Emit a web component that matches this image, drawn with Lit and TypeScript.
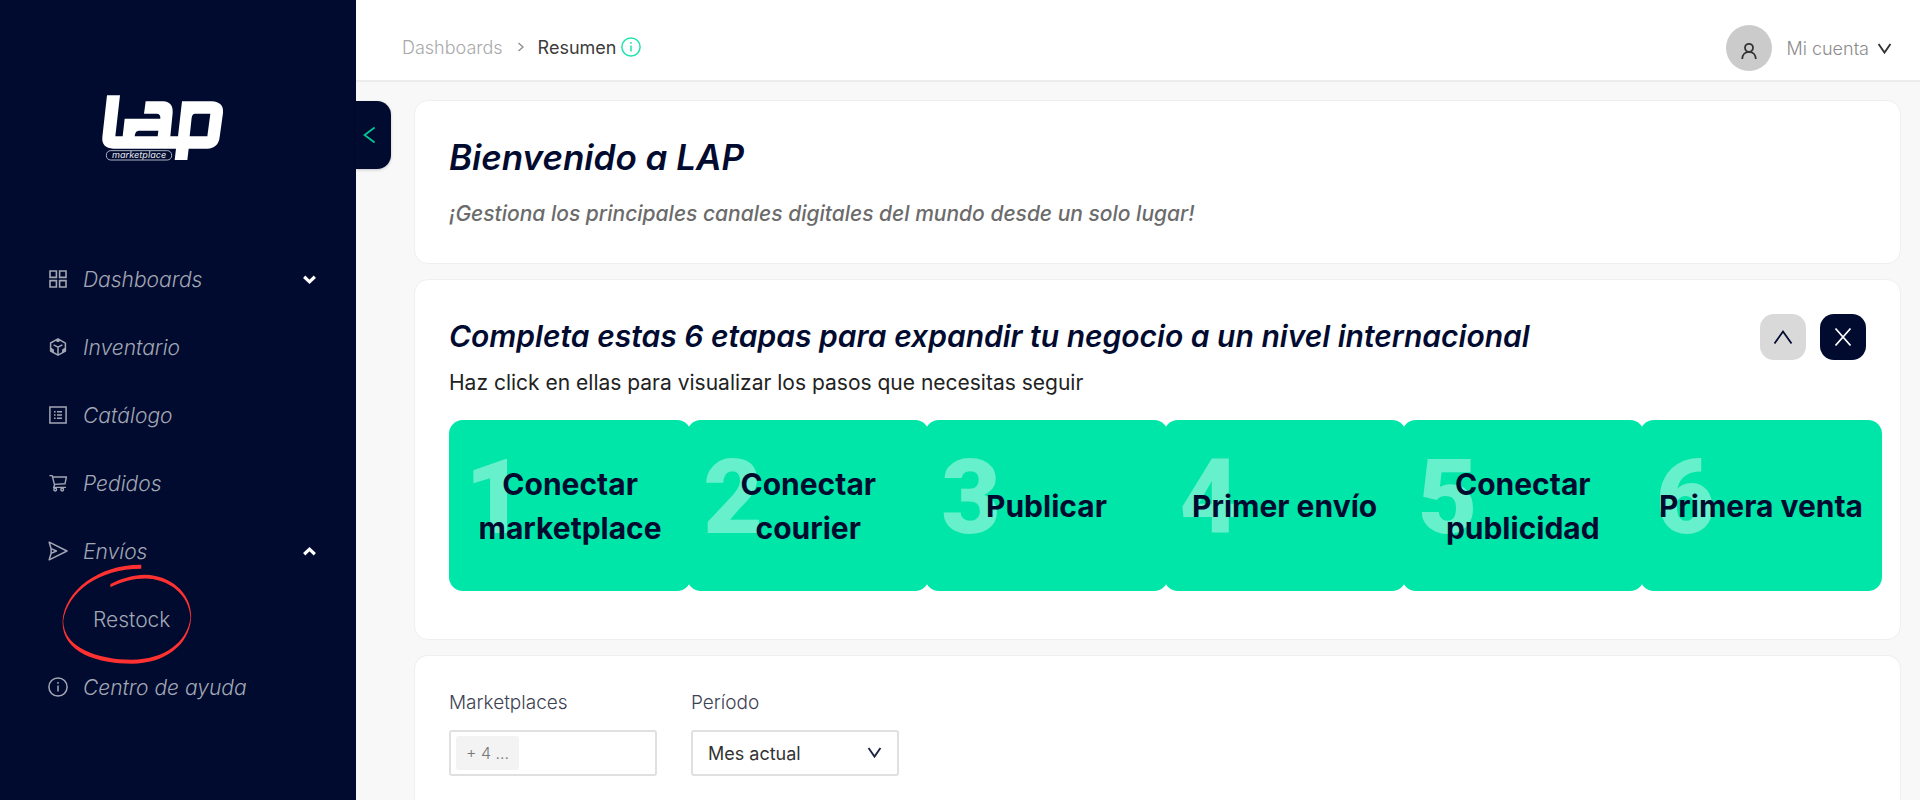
import { LitElement, html, css, svg } from "lit";
import { customElement, state } from "lit/decorators.js";

const icons = {
  grid: svg`<svg class="icon" viewBox="0 0 18 18" fill="none" stroke="currentColor" stroke-width="1.6"><path d="M1 1h6.4v6.4H1zM10.6 1H17v6.4h-6.4zM1 10.6h6.4V17H1zM10.6 10.6H17V17h-6.4z"/></svg>`,
  box: svg`<svg class="icon" viewBox="0 0 18 18" fill="none" stroke="currentColor" stroke-width="1.5" stroke-linejoin="round"><path d="M9 .9l7.4 4.2v8L9 17.2 1.6 13V5z"/><path d="M4.6 6.8L9 9.2l4.4-2.4M9 9.2V17"/><path d="M6.6 2.4L9 3.8l2.4-1.4L9 1zM1.8 10.2l2.6 1.4v2.8L1.8 13zM16.2 10.2l-2.6 1.4v2.8l2.6-1.4z" fill="currentColor" stroke-width="1"/></svg>`,
  list: svg`<svg class="icon" viewBox="0 0 18 18" fill="none" stroke="currentColor" stroke-width="1.5"><path d="M.9.9h16.2v16.2H.9z"/><path d="M5 5.8h1.6M5 9h1.6M5 12.2h1.6M8 5.8h5M8 9h5M8 12.2h5" stroke-width="1.5"/></svg>`,
  cart: svg`<svg class="icon" viewBox="0 0 18 18" fill="none" stroke="currentColor" stroke-width="1.4" stroke-linejoin="round"><path d="M.4 1.6h2.8l2.4 9.600"/><path d="M3.600 3h13.800l-1.400 6.800-10.600.6"/><path d="M5.600 11l-1 2.400h12.400"/><circle cx="6.200" cy="15.600" r="1.400"/><circle cx="13.200" cy="15.600" r="1.400"/></svg>`,
  send: svg`<svg class="icon wide" viewBox="0 0 20 20" fill="none" stroke="currentColor" stroke-width="1.5" stroke-linejoin="round"><path d="M1.2 1.2L19 10 1.2 18.8l1.9-6.6V7.8z"/><path d="M3.1 7.6L8.4 10l-5.3 2.4"/></svg>`,
  info: svg`<svg class="icon wide" viewBox="0 0 20 20" fill="none" stroke="currentColor" stroke-width="1.5"><circle cx="10" cy="10" r="9.1"/><path d="M10 8.4v6.2M10 5v1.8"/></svg>`,
};

const chevron = (d: string, cls: string) =>
  svg`<svg class=${cls} viewBox="0 0 16 12" fill="none" stroke="currentColor"><path d=${d}/></svg>`;

interface NavItem {
  id: string;
  label: string;
  icon: keyof typeof icons;
  children?: string[];
}

const NAV: NavItem[] = [
  { id: "dashboards", label: "Dashboards", icon: "grid", children: ["Resumen"] },
  { id: "inventario", label: "Inventario", icon: "box" },
  { id: "catalogo", label: "Catálogo", icon: "list" },
  { id: "pedidos", label: "Pedidos", icon: "cart" },
  { id: "envios", label: "Envíos", icon: "send", children: ["Restock"] },
  { id: "ayuda", label: "Centro de ayuda", icon: "info" },
];

const STEPS = [
  "Conectar marketplace",
  "Conectar courier",
  "Publicar",
  "Primer envío",
  "Conectar publicidad",
  "Primera venta",
];

@customElement("lap-sidebar")
class LapSidebar extends LitElement {
  @state() private open = new Set(["envios"]);

  static styles = css`
    :host {
      display: block;
      position: relative;
      background: #000b2f;
      color: #a3a7b4;
    }
    .logo {
      display: block;
      width: 127px;
      height: 70px;
      margin: 93px 0 0 100px;
    }
    .tag {
      font: italic 500 27px Inter, sans-serif;
    }
    nav {
      padding: 82px 38px 0 48px;
    }
    ul {
      list-style: none;
      margin: 0;
      padding: 0;
    }
    .item {
      display: flex;
      align-items: center;
      width: 100%;
      height: 68px;
      box-sizing: border-box;
      gap: 15px;
      padding: 0;
      border: 0;
      background: none;
      color: inherit;
      font: italic 300 21px Inter, sans-serif;
      text-decoration: none;
      text-align: left;
      cursor: pointer;
    }
    .icon {
      width: 18px;
      height: 18px;
      margin: 0 1px;
      flex: none;
    }
    .icon.wide {
      width: 20px;
      height: 20px;
      margin: 0;
    }
    .label {
      flex: 1;
    }
    .caret {
      width: 17px;
      height: 13px;
      stroke-width: 3;
      color: #fff;
    }
    .child {
      position: relative;
    }
    .child .item {
      padding-left: 45px;
      font-style: normal;
    }
    .mark {
      position: absolute;
      left: 14px;
      top: -21px;
      width: 130px;
      height: 100px;
      pointer-events: none;
    }
    .toggle {
      position: absolute;
      left: 100%;
      top: 101px;
      width: 35px;
      height: 68px;
      padding: 0 0 0 6px;
      border: 0;
      border-radius: 0 14px 14px 0;
      background: #000b2f;
      color: #00c795;
      box-shadow: 0 1px 3px rgba(0, 0, 0, 0.2);
      cursor: pointer;
    }
    .back {
      display: block;
      width: 16px;
      height: 18px;
    }
  `;

  private flip(id: string) {
    const next = new Set(this.open);
    next.has(id) ? next.delete(id) : next.add(id);
    this.open = next;
  }

  private renderItem(item: NavItem) {
    if (!item.children) {
      return html`<li><a class="item" href="#${item.id}">${icons[item.icon]}<span class="label">${item.label}</span></a></li>`;
    }
    const open = this.open.has(item.id);
    return html`<li>
      <button class="item" type="button" aria-expanded=${open} @click=${() => this.flip(item.id)}>
        ${icons[item.icon]}<span class="label">${item.label}</span>
        ${chevron(open ? "M3 8.6l5-4.8 5 4.8" : "M3 3.4l5 4.8 5-4.8", "caret")}
      </button>
      ${open
        ? html`<ul>
            ${item.children.map(
              (c) => html`<li class="child">
                <a class="item" href="#${c.toLowerCase()}">${c}</a>
                ${c === "Restock"
                  ? svg`<svg class="mark" viewBox="185 163 390 301" aria-hidden="true"><path fill="#ff3131" d="M423 165C300 163 192 240 186 335C184 430 290 463 395 463C490 463 568 410 573 325C576 250 510 196 435 195C400 195 360 207 330 223V233C365 217 400 207 435 207C505 208 568 255 571 325C562 400 490 451 395 451C290 450 190 415 188 335C200 245 300 176 423 177Z"/></svg>`
                  : ""}
              </li>`
            )}
          </ul>`
        : ""}
    </li>`;
  }

  render() {
    return html`
      <svg class="logo" viewBox="300 100 381 210" role="img" aria-label="LAP marketplace">
        <path fill="#fff" fill-rule="evenodd" d="M321 107H360L346 230H368L374 177H481Q482 162 470 162H432L437 125H490Q520 127 518 160L511 230H534L546 125H635Q672 127 669 160L659 232Q655 266 622 267H566L562 301H524L528 267H340Q304 265 307 232ZM416 213H475L473 230H404L406 221Q408 213 416 213ZM585 162H631L622 230H569L575 174Q577 162 585 162Z"/>
        <rect x="319" y="273" width="196" height="28" rx="13" fill="none" stroke="#aeb2c0" stroke-width="3"/>
        <text class="tag" x="336" y="295" fill="#d5d7df">marketplace</text>
      </svg>
      <nav><ul>${NAV.map((i) => this.renderItem(i))}</ul></nav>
      <button class="toggle" type="button" aria-label="Contraer menú">
        <svg class="back" viewBox="0 0 16 18" fill="none" stroke="currentColor" stroke-width="1.8"><path d="M12.6 1.5L2.6 9l10 7.5"/></svg>
      </button>
    `;
  }
}

@customElement("lap-topbar")
class LapTopbar extends LitElement {
  static styles = css`
    :host {
      display: flex;
      align-items: center;
      justify-content: space-between;
      height: 82px;
      box-sizing: border-box;
      padding: 14px 28px 0 46px;
      border-bottom: 2px solid #ececec;
      background: #fff;
      font: 300 18px Inter, sans-serif;
      color: #8c8c8c;
    }
    .crumbs {
      display: flex;
      align-items: center;
    }
    .crumb {
      color: #a9a9a9;
      text-decoration: none;
    }
    .sep {
      width: 8px;
      height: 10px;
      margin: 0 13px 0 14px;
    }
    .here {
      color: #3c3c3c;
      font-weight: 400;
    }
    .icon {
      width: 20px;
      height: 20px;
      margin-left: 5px;
      color: #1fe3ae;
    }
    .account {
      display: flex;
      align-items: center;
      padding: 2px 0 0;
      border: 0;
      background: none;
      font: inherit;
      color: inherit;
      cursor: pointer;
    }
    .avatar {
      display: grid;
      place-items: center;
      width: 46px;
      height: 46px;
      margin-right: 14px;
      border-radius: 50%;
      background: #cbcbcb;
      color: #333;
    }
    .person {
      width: 16px;
      height: 18px;
      margin-top: 6px;
    }
    .down {
      width: 15px;
      height: 11px;
      margin-left: 8px;
      stroke-width: 2;
      color: #333;
    }
  `;

  render() {
    return html`
      <nav class="crumbs" aria-label="Ruta">
        <a class="crumb" href="#dashboards">Dashboards</a>
        <svg class="sep" viewBox="0 0 8 10" fill="none" stroke="#8c8c8c" stroke-width="1.3"><path d="M1.5 1l4.5 4-4.5 4"/></svg>
        <span class="here" aria-current="page">Resumen</span>
        ${icons.info}
      </nav>
      <button class="account" type="button">
        <span class="avatar"><svg class="person" viewBox="0 0 16 18" fill="none" stroke="currentColor" stroke-width="1.8"><circle cx="8" cy="5.8" r="4"/><path d="M1.2 17c.2-4.2 2.8-7.2 6.8-7.2s6.6 3 6.8 7.2"/></svg></span>
        <span>Mi cuenta</span>
        ${chevron("M1.5 1l6.5 9.5 6.5-9.5", "down")}
      </button>
    `;
  }
}

@customElement("app-root")
class AppRoot extends LitElement {
  static styles = css`
    :host {
      display: grid;
      grid-template-columns: 356px minmax(0, 1fr);
      min-height: 100vh;
      background: #f8f8f8;
      font-family: Inter, sans-serif;
    }
    .page {
      display: flex;
      flex-direction: column;
    }
    lap-sidebar {
      z-index: 1;
    }
    main {
      flex: 1;
      display: flex;
      flex-direction: column;
      gap: 15px;
      padding: 18px 19px 0 58px;
    }
    .card {
      box-sizing: border-box;
      padding: 34px;
      border: 1px solid #efefef;
      border-radius: 14px;
      background: #fff;
    }
    .stages {
      padding: 34px 18px 48px 34px;
    }
    .filters {
      flex: 1;
      display: flex;
      align-items: flex-start;
      gap: 34px;
      padding-bottom: 16px;
      border-bottom: 0;
      border-radius: 14px 14px 0 0;
    }
    h1,
    h2,
    p {
      margin: 0;
      font-style: italic;
      font-weight: 600;
      color: #000b2f;
    }
    h1 {
      font-size: 35px;
      line-height: 44px;
    }
    h2 {
      font-size: 30px;
      line-height: 44px;
    }
    .lead {
      margin-top: 20px;
      font-size: 21px;
      line-height: 30px;
      font-weight: 500;
      color: #6b6b6b;
    }
    .head {
      display: flex;
      justify-content: space-between;
      padding-right: 16px;
    }
    .hint {
      margin-top: 10px;
      font-size: 21px;
      line-height: 30px;
      font-style: normal;
      font-weight: 400;
      color: #222;
    }
    .actions {
      display: flex;
      gap: 14px;
    }
    .square {
      display: grid;
      place-items: center;
      width: 46px;
      height: 46px;
      padding: 0;
      border: 0;
      border-radius: 14px;
      background: #d9d9d9;
      color: #000b2f;
      cursor: pointer;
    }
    .square.dark {
      background: #000b2f;
      color: #fff;
    }
    .glyph {
      width: 20px;
      height: 20px;
    }
    .steps {
      display: flex;
      margin: 22px 0 0;
      padding: 0;
      list-style: none;
    }
    .slot {
      flex: 1;
      min-width: 0;
    }
    .slot + .slot {
      margin-left: -4px;
    }
    .step {
      position: relative;
      display: grid;
      place-items: center;
      width: 100%;
      height: 171px;
      padding: 0 10px;
      border: 0;
      border-radius: 14px;
      background: #00e6a8;
      color: #000b2f;
      font: 700 30px/44px Inter, sans-serif;
      cursor: pointer;
    }
    .number {
      position: absolute;
      left: 16px;
      top: 22px;
      font: 900 103px/112px Roboto, sans-serif;
      color: rgba(255, 255, 255, 0.4);
    }
    .name {
      position: relative;
    }
    .field {
      width: 208px;
    }
    .caption {
      display: block;
      margin-bottom: 14px;
      font-size: 19px;
      line-height: 26px;
      font-weight: 300;
      color: #3d4253;
    }
    .control {
      position: relative;
      display: block;
      width: 100%;
      height: 46px;
      box-sizing: border-box;
      border: 2px solid #e0e0e0;
      border-radius: 3px;
      background: #fff;
      color: #333;
      font: 400 18px Inter, sans-serif;
      text-align: left;
    }
    .multi {
      padding: 0 5px;
    }
    .chip {
      display: block;
      width: 63px;
      box-sizing: border-box;
      border-radius: 3px;
      background: #f3f3f3;
      color: #777;
      font-size: 16px;
      line-height: 34px;
      font-weight: 300;
      text-align: center;
    }
    .picker {
      position: relative;
    }
    select.control {
      appearance: none;
      padding: 0 40px 0 15px;
    }
    .arrow {
      position: absolute;
      right: 17px;
      top: 17px;
      width: 15px;
      height: 11px;
      stroke-width: 2;
      color: #1b2345;
      pointer-events: none;
    }
  `;

  render() {
    return html`
      <lap-sidebar></lap-sidebar>
      <div class="page">
        <lap-topbar></lap-topbar>
        <main>
          <section class="card">
            <h1>Bienvenido a LAP</h1>
            <p class="lead">¡Gestiona los principales canales digitales del mundo desde un solo lugar!</p>
          </section>
          <section class="card stages">
            <div class="head">
              <div>
                <h2>Completa estas 6 etapas para expandir tu negocio a un nivel internacional</h2>
                <p class="hint">Haz click en ellas para visualizar los pasos que necesitas seguir</p>
              </div>
              <div class="actions">
                <button class="square" type="button" aria-label="Contraer">
                  <svg class="glyph" viewBox="0 0 20 20" fill="none" stroke="currentColor" stroke-width="1.8"><path d="M1.5 16.5L10 4.5l8.5 12"/></svg>
                </button>
                <button class="square dark" type="button" aria-label="Cerrar">
                  <svg class="glyph" viewBox="0 0 20 20" fill="none" stroke="currentColor" stroke-width="1.8"><path d="M2.5 1.5l15 17M17.5 1.5l-15 17"/></svg>
                </button>
              </div>
            </div>
            <ol class="steps">
              ${STEPS.map(
                (name, i) => html`<li class="slot">
                  <button class="step" type="button">
                    <span class="number">${i + 1}</span>
                    <span class="name">${name}</span>
                  </button>
                </li>`
              )}
            </ol>
          </section>
          <section class="card filters">
            <div class="field">
              <label class="caption" for="markets">Marketplaces</label>
              <button class="control multi" id="markets" type="button" aria-haspopup="listbox"><span class="chip">+ 4 ...</span></button>
            </div>
            <div class="field">
              <label class="caption" for="period">Período</label>
              <div class="picker">
                <select class="control" id="period">
                  <option>Mes actual</option>
                </select>
                ${chevron("M1.5 1l6.5 9.5 6.5-9.5", "arrow")}
              </div>
            </div>
          </section>
        </main>
      </div>
    `;
  }
}
